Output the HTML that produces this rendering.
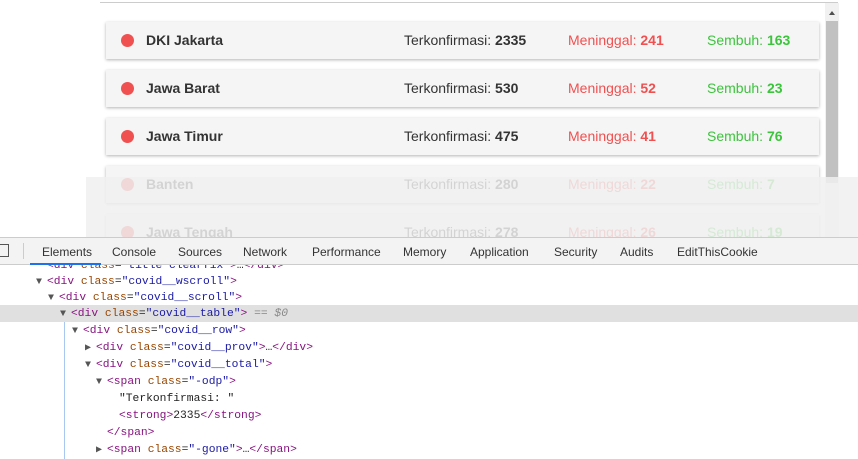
<!DOCTYPE html>
<html><head><style>
*{margin:0;padding:0;box-sizing:border-box}
body{width:858px;height:459px;overflow:hidden;background:#fff;position:relative;font-family:"Liberation Sans",sans-serif}
.topline{position:absolute;left:100px;top:2px;width:738px;height:1px;background:#ccc}
.sb{position:absolute;left:825px;top:3px;width:14px;height:234px;background:#f1f1f1}
.sb .thumb{position:absolute;left:1px;top:18px;width:12px;height:162px;background:#c1c1c1}
.sb .arr{position:absolute;left:4px;top:8px;width:0;height:0;border-left:3px solid transparent;border-right:3px solid transparent;border-bottom:4px solid #505050}
.card{position:absolute;left:106px;width:713px;height:37px;background:#f5f5f5;box-shadow:0 1px 3px rgba(0,0,0,.3);font-size:14px;color:#333}
.card .dot{position:absolute;left:15px;top:12px;width:13px;height:13px;border-radius:50%;background:#f05050}
.card .n{position:absolute;left:40px;top:10px;font-weight:bold}
.card .a{position:absolute;left:298px;top:10px}
.card .b{position:absolute;left:462px;top:10px;color:#f05050}
.card .c{position:absolute;left:601px;top:10px;color:#3cc43c}
.ov{position:absolute;left:86px;top:177px;width:772px;height:60px;background:rgba(240,240,240,.85)}
.tabs{position:absolute;left:0;top:237px;width:858px;height:28px;background:#f3f3f3;border-top:1px solid #ccc;border-bottom:1px solid #ccc;font-size:12px;color:#333;z-index:5}
.tabs span{position:absolute;top:7px}
.ul{position:absolute;left:30px;top:25px;width:71px;height:2px;background:#1a73e8}
.code{position:absolute;left:0;top:265px;width:858px;height:194px;font-family:"Liberation Mono",monospace;font-size:11.3px;background:#fff;overflow:hidden}
.l{position:absolute;height:17px;line-height:17px;white-space:pre;color:#222}
.t{color:#881280}.at{color:#994500}.v{color:#1a1aa6}.g{color:#888}
.hl{position:absolute;left:0;top:40px;width:858px;height:17px;background:#e0e0e0}
.tri{color:#555;font-size:10px;display:inline-block;width:11px}
</style></head><body>
<div class="topline"></div>
<div class="card" style="top:22px"><div class="dot"></div><div class="n">DKI Jakarta</div><div class="a">Terkonfirmasi: <b>2335</b></div><div class="b">Meninggal: <b>241</b></div><div class="c">Sembuh: <b>163</b></div></div>
<div class="card" style="top:70px"><div class="dot"></div><div class="n">Jawa Barat</div><div class="a">Terkonfirmasi: <b>530</b></div><div class="b">Meninggal: <b>52</b></div><div class="c">Sembuh: <b>23</b></div></div>
<div class="card" style="top:118px"><div class="dot"></div><div class="n">Jawa Timur</div><div class="a">Terkonfirmasi: <b>475</b></div><div class="b">Meninggal: <b>41</b></div><div class="c">Sembuh: <b>76</b></div></div>
<div class="card" style="top:166px"><div class="dot"></div><div class="n">Banten</div><div class="a">Terkonfirmasi: <b>280</b></div><div class="b">Meninggal: <b>22</b></div><div class="c">Sembuh: <b>7</b></div></div>
<div class="card" style="top:214px"><div class="dot"></div><div class="n">Jawa Tengah</div><div class="a">Terkonfirmasi: <b>278</b></div><div class="b">Meninggal: <b>26</b></div><div class="c">Sembuh: <b>19</b></div></div>
<div class="sb"><div class="arr"></div><div class="thumb"></div></div>
<div class="ov"></div>
<div class="tabs">
<div style="position:absolute;left:-3px;top:6px;width:12px;height:13px;border:1px solid #555"></div>
<div style="position:absolute;left:23px;top:5px;width:1px;height:16px;background:#ccc"></div>
<span style="left:42px">Elements</span><span style="left:112px">Console</span><span style="left:178px">Sources</span><span style="left:243px">Network</span><span style="left:312px">Performance</span><span style="left:403px">Memory</span><span style="left:470px">Application</span><span style="left:554px">Security</span><span style="left:620px">Audits</span><span style="left:677px">EditThisCookie</span>
<div class="ul"></div></div>
<div class="code">
<div class="hl"></div>
<div style="position:absolute;left:64px;top:57px;width:1px;height:137px;background:#a8c8f0"></div>
<div class="l" style="left:36px;top:-7px"><span class="tri"></span><span class="t">&lt;div</span> <span class="at">class</span>=<span class="v">"title clearfix"</span><span class="t">&gt;</span>…<span class="t">&lt;/div&gt;</span></div>
<div class="l" style="left:36px;top:9px"><span class="tri">▼</span><span class="t">&lt;div</span> <span class="at">class</span>=<span class="v">"covid__wscroll"</span><span class="t">&gt;</span></div>
<div class="l" style="left:48px;top:25px"><span class="tri">▼</span><span class="t">&lt;div</span> <span class="at">class</span>=<span class="v">"covid__scroll"</span><span class="t">&gt;</span></div>
<div class="l" style="left:60px;top:41px"><span class="tri">▼</span><span class="t">&lt;div</span> <span class="at">class</span>=<span class="v">"covid__table"</span><span class="t">&gt;</span> <span class="g">== <i>$0</i></span></div>
<div class="l" style="left:72px;top:58px"><span class="tri">▼</span><span class="t">&lt;div</span> <span class="at">class</span>=<span class="v">"covid__row"</span><span class="t">&gt;</span></div>
<div class="l" style="left:85px;top:75px"><span class="tri">▶</span><span class="t">&lt;div</span> <span class="at">class</span>=<span class="v">"covid__prov"</span><span class="t">&gt;</span>…<span class="t">&lt;/div&gt;</span></div>
<div class="l" style="left:85px;top:92px"><span class="tri">▼</span><span class="t">&lt;div</span> <span class="at">class</span>=<span class="v">"covid__total"</span><span class="t">&gt;</span></div>
<div class="l" style="left:96px;top:109px"><span class="tri">▼</span><span class="t">&lt;span</span> <span class="at">class</span>=<span class="v">"-odp"</span><span class="t">&gt;</span></div>
<div class="l" style="left:119px;top:126px">"Terkonfirmasi: "</div>
<div class="l" style="left:119px;top:143px"><span class="t">&lt;strong&gt;</span>2335<span class="t">&lt;/strong&gt;</span></div>
<div class="l" style="left:107px;top:160px"><span class="t">&lt;/span&gt;</span></div>
<div class="l" style="left:96px;top:177px"><span class="tri">▶</span><span class="t">&lt;span</span> <span class="at">class</span>=<span class="v">"-gone"</span><span class="t">&gt;</span>…<span class="t">&lt;/span&gt;</span></div>
</div>
</body></html>
